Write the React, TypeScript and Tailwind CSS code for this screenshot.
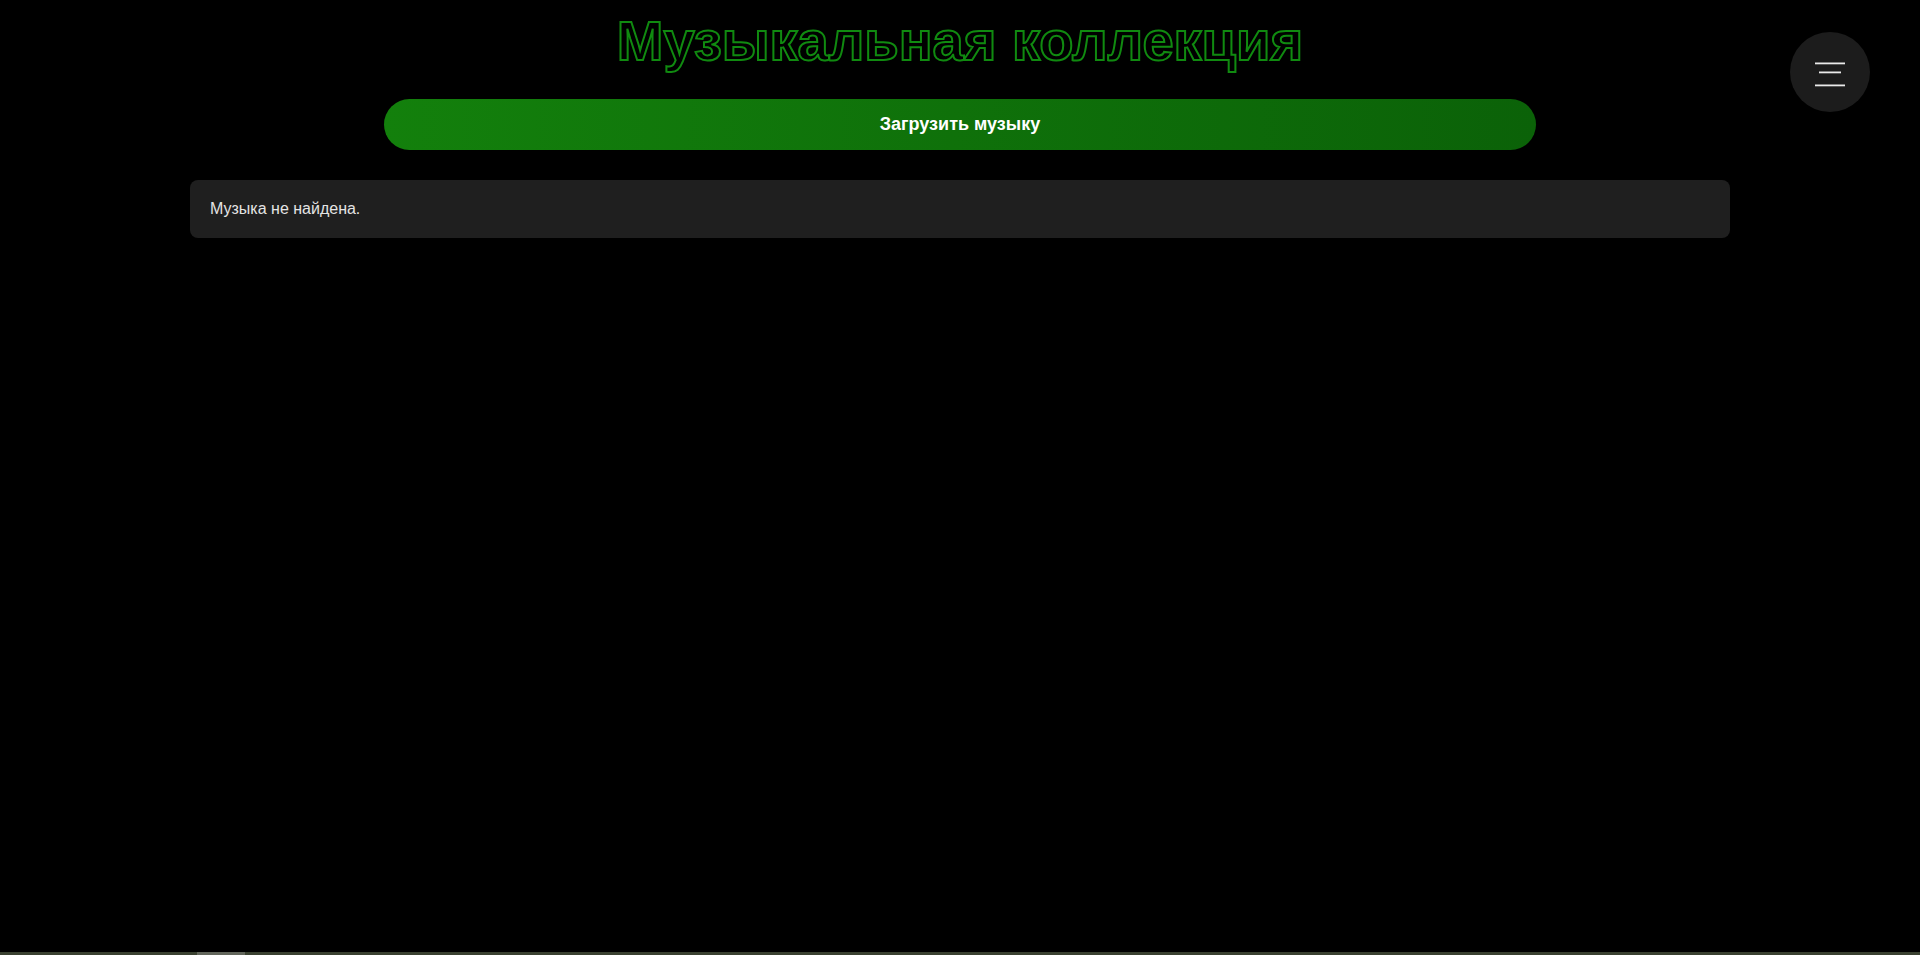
import React from "react";

export default function App() {
  return (
    <div className="relative min-h-[955px] w-full bg-black font-['Liberation_Sans',Arial,sans-serif] text-white">
      <h1 className="pt-[9px] text-center text-[56px] font-bold leading-[64px] text-transparent [-webkit-text-stroke:2px_#108a10]">
        Музыкальная коллекция
      </h1>

      <div className="mt-[26px] flex justify-center">
        <button className="w-[1152px] rounded-full bg-gradient-to-r from-[#13800c] to-[#0b6208] py-[15px] text-[18px] font-bold leading-[21px] text-white">
          Загрузить музыку
        </button>
      </div>

      <div className="mx-[190px] mt-[30px] rounded-lg bg-[#1f1f1f] p-5 text-[16px] leading-[18px] text-[#e4e4e4]">
        Музыка не найдена.
      </div>

      <button className="absolute right-[50px] top-[32px] flex h-20 w-20 items-center justify-center rounded-full bg-[#1c1c1c]">
        <svg width="80" height="80" viewBox="0 0 80 80" className="block">
          <rect x="25" y="30.5" width="30" height="1.8" fill="#eaeaea" />
          <rect x="29" y="39.5" width="22" height="1.8" fill="#eaeaea" />
          <rect x="25" y="52.5" width="30" height="1.8" fill="#eaeaea" />
        </svg>
      </button>

      <div className="fixed bottom-0 left-0 h-[3px] w-full bg-[#3a4130]">
        <div className="ml-[197px] h-full w-[48px] bg-[#62665b]" />
      </div>
    </div>
  );
}
